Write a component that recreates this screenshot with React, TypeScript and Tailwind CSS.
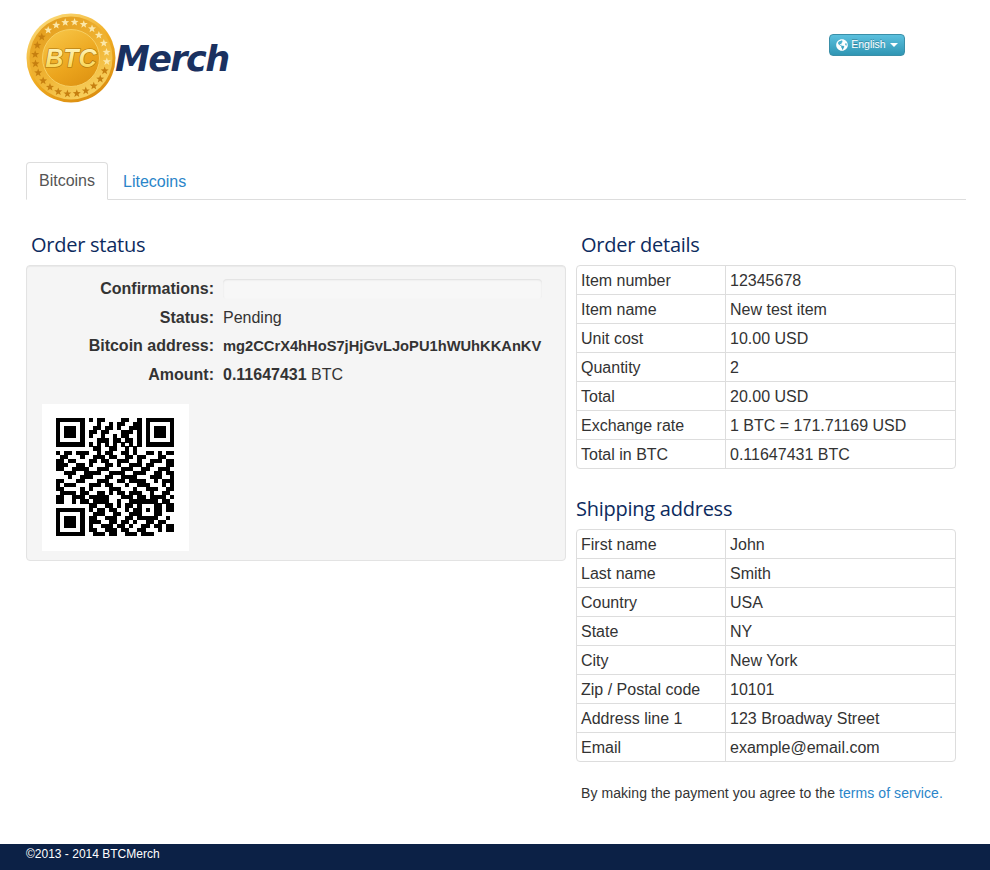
import { FaGlobeAmericas } from 'react-icons/fa';

const orderDetails = [
  ['Item number', '12345678'],
  ['Item name', 'New test item'],
  ['Unit cost', '10.00 USD'],
  ['Quantity', '2'],
  ['Total', '20.00 USD'],
  ['Exchange rate', '1 BTC = 171.71169 USD'],
  ['Total in BTC', '0.11647431 BTC'],
];

const shippingAddress = [
  ['First name', 'John'],
  ['Last name', 'Smith'],
  ['Country', 'USA'],
  ['State', 'NY'],
  ['City', 'New York'],
  ['Zip / Postal code', '10101'],
  ['Address line 1', '123 Broadway Street'],
  ['Email', 'example@email.com'],
];

const qrRows = [
  '11111110101100001100101111111',
  '10000010001001011001101000001',
  '10111010011011010011101011101',
  '10111010110110001110101011101',
  '10111010100100101100101011101',
  '10000010001110110110101000001',
  '11111110101010101010101111111',
  '00000000011001100101000000000',
  '10110111001011001101001101011',
  '01100010011101100110110001100',
  '11011000110110011100100111011',
  '11100110100011010011101100011',
  '11001111001110001110011001110',
  '00111001111001111001110011011',
  '00010011100011001111000111001',
  '11000110001110011011110010111',
  '10111000111011000100111000101',
  '11000010100001110001001110011',
  '01111011001101011011100100110',
  '11001110111110001110110111101',
  '11001011011110010011111110110',
  '00000000110011010110100011011',
  '11111110101101100101101011011',
  '10000010011100110011100011000',
  '10111010110011100110111110010',
  '10111010111001101101001101100',
  '10111010100111011010011011011',
  '10000010110011101100110001011',
  '11111110011101100111011100000',
];

function QrCode() {
  return (
    <svg width="147" height="147" viewBox="-3.44 -3.44 36.12 36.12" shapeRendering="crispEdges" className="bg-white">
      {qrRows.map((row, y) =>
        row.split('').map((c, x) => (c === '1' ? <rect key={x + '-' + y} x={x} y={y} width="1.02" height="1.02" fill="#000" /> : null)),
      )}
    </svg>
  );
}

function starPoints(cx: number, cy: number, r: number) {
  const pts: string[] = [];
  for (let i = 0; i < 10; i++) {
    const rad = i % 2 === 0 ? r : r * 0.42;
    const a = (Math.PI / 5) * i - Math.PI / 2;
    pts.push(`${(cx + rad * Math.cos(a)).toFixed(2)},${(cy + rad * Math.sin(a)).toFixed(2)}`);
  }
  return pts.join(' ');
}

function Coin() {
  const stars = Array.from({ length: 24 }, (_, i) => {
    const a = (i / 24) * Math.PI * 2 + 0.1;
    return { x: 45 + 36 * Math.cos(a), y: 45 + 36 * Math.sin(a), light: Math.sin(a) < 0.1 && Math.cos(a) > -0.7 };
  });
  return (
    <svg width="90" height="90" viewBox="0 0 90 90" className="shrink-0">
      <defs>
        <linearGradient id="rim" x1="0.2" y1="0" x2="0.8" y2="1">
          <stop offset="0" stopColor="#fbdc7c" />
          <stop offset="0.5" stopColor="#f0ac22" />
          <stop offset="1" stopColor="#d98a0e" />
        </linearGradient>
        <linearGradient id="band" x1="0.2" y1="0" x2="0.8" y2="1">
          <stop offset="0" stopColor="#e39c1c" />
          <stop offset="0.55" stopColor="#f0b535" />
          <stop offset="1" stopColor="#f9d566" />
        </linearGradient>
        <linearGradient id="face" x1="0.2" y1="0" x2="0.8" y2="1">
          <stop offset="0" stopColor="#f7c546" />
          <stop offset="0.6" stopColor="#eca51d" />
          <stop offset="1" stopColor="#dd9212" />
        </linearGradient>
        <linearGradient id="btc" x1="0" y1="0" x2="0" y2="1">
          <stop offset="0" stopColor="#fffad0" />
          <stop offset="1" stopColor="#f8cf3e" />
        </linearGradient>
      </defs>
      <circle cx="45" cy="45" r="44.5" fill="url(#rim)" />
      <circle cx="45" cy="45" r="41.5" fill="url(#band)" />
      {stars.map((s, i) => (
        <polygon key={i} points={starPoints(s.x, s.y, 4.2)} fill={s.light ? '#fbe7a8' : '#c67f10'} />
      ))}
      <circle cx="45" cy="45" r="28.5" fill="url(#face)" stroke="#f7cf62" strokeWidth="1" />
      <text x="45" y="54" textAnchor="middle" fontFamily="'Liberation Sans', sans-serif" fontWeight="700" fontStyle="italic" fontSize="25" fill="url(#btc)" stroke="#a9700c" strokeWidth="1.2" paintOrder="stroke">
        BTC
      </text>
    </svg>
  );
}

function InfoTable({ rows }: { rows: string[][] }) {
  return (
    <table className="w-[380px] border-separate border-spacing-0 border border-[#dddddd] rounded-[4px] text-[16px] text-[#333333]">
      <tbody>
        {rows.map((r, i) => (
          <tr key={r[0]} className={i > 0 ? 'h-[29px]' : 'h-[28px]'}>
            <td className={`w-[148px] px-[4px] pt-[2px] leading-[20px] ${i > 0 ? 'border-t border-[#dddddd]' : ''}`}>{r[0]}</td>
            <td className={`px-[4px] pt-[2px] leading-[20px] border-l border-[#dddddd] ${i > 0 ? 'border-t' : ''}`}>{r[1]}</td>
          </tr>
        ))}
      </tbody>
    </table>
  );
}

function StatusRow({ label, tight, children }: { label: string; tight?: boolean; children: React.ReactNode }) {
  return (
    <div className={`flex items-center ${tight ? 'h-[28px]' : 'h-[29px]'}`}>
      <div className="w-[187px] text-right font-bold text-[16px] text-[#333333]">{label}</div>
      <div className="ml-[9px] text-[16px] text-[#333333]">{children}</div>
    </div>
  );
}

export default function App() {
  return (
    <div className="min-h-[870px] flex flex-col bg-white font-['Liberation_Sans',Arial,sans-serif]">
      <div className="pl-[26px] pr-[24px] flex-grow">
        <div className="h-[162px] flex items-start justify-between pt-[13px]">
          <div className="flex items-center">
            <Coin />
            <span className="-ml-[1px] mt-[2px] font-['DejaVu_Sans',sans-serif] font-bold italic text-[35px] leading-none tracking-[-1.6px] text-[#1a3160]">Merch</span>
          </div>
          <button className="mt-[21px] mr-[61px] flex items-center h-[22px] w-[76px] justify-center gap-[3px] rounded-[4px] border border-[#3a8fa8] bg-gradient-to-b from-[#5bc0de] to-[#2f96b4] text-[10.5px] font-medium text-white [text-shadow:0_-1px_0_rgba(0,0,0,0.25)]">
            <FaGlobeAmericas className="text-[12px]" />
            <span>English</span>
            <span className="ml-[1px] w-0 h-0 border-x-[4px] border-x-transparent border-t-[4px] border-t-white"></span>
          </button>
        </div>

        <div className="flex items-end h-[38px] border-b border-[#dddddd]">
          <div className="h-[38px] w-[82px] -mb-[1px] flex items-center justify-center rounded-t-[4px] border border-[#dddddd] border-b-white bg-white text-[16px] text-[#555555]">Bitcoins</div>
          <a href="#" className="h-[37px] ml-[15px] flex items-center pt-[2px] text-[16px] text-[#2a85c9]">Litecoins</a>
        </div>

        <div className="flex mt-[29px]">
          <div className="w-[540px]">
            <h3 className="h-[36px] pl-[5px] font-['Open_Sans',sans-serif] text-[20px] leading-[32px] tracking-[-0.25px] text-[#0d2b5e]">Order status</h3>
            <div className="h-[296px] rounded-[4px] border border-[#e3e3e3] bg-[#f5f5f5] shadow-[inset_0_1px_1px_rgba(0,0,0,0.05)] pt-[8px]">
              <StatusRow label="Confirmations:">
                <div className="w-[319px] h-[20px] rounded-[4px] bg-[#f7f7f7] shadow-[inset_0_1px_2px_rgba(0,0,0,0.1)]"></div>
              </StatusRow>
              <StatusRow label="Status:">Pending</StatusRow>
              <StatusRow label="Bitcoin address:" tight>
                <span className="font-bold text-[14.7px]">mg2CCrX4hHoS7jHjGvLJoPU1hWUhKKAnKV</span>
              </StatusRow>
              <StatusRow label="Amount:">
                <span className="font-bold">0.11647431</span> BTC
              </StatusRow>
              <div className="mt-[15px] ml-[15px] w-[147px] h-[147px]">
                <QrCode />
              </div>
            </div>
          </div>

          <div className="ml-[10px]">
            <h3 className="h-[36px] pl-[5px] font-['Open_Sans',sans-serif] text-[20px] leading-[32px] tracking-[-0.25px] text-[#0d2b5e]">Order details</h3>
            <InfoTable rows={orderDetails} />
            <h3 className="mt-[24px] h-[36px] font-['Open_Sans',sans-serif] text-[20px] leading-[32px] tracking-[-0.25px] text-[#0d2b5e]">Shipping address</h3>
            <InfoTable rows={shippingAddress} />
            <p className="mt-[21px] pl-[5px] text-[14px] leading-[20px] tracking-[0.07px] text-[#333333]">
              By making the payment you agree to the <a href="#" className="text-[#2a85c9]">terms of service.</a>
            </p>
          </div>
        </div>
      </div>

      <div className="h-[26px] bg-[#0c2146] px-[26px] text-[12px] leading-[20px] text-white">©2013 - 2014 BTCMerch</div>
    </div>
  );
}
